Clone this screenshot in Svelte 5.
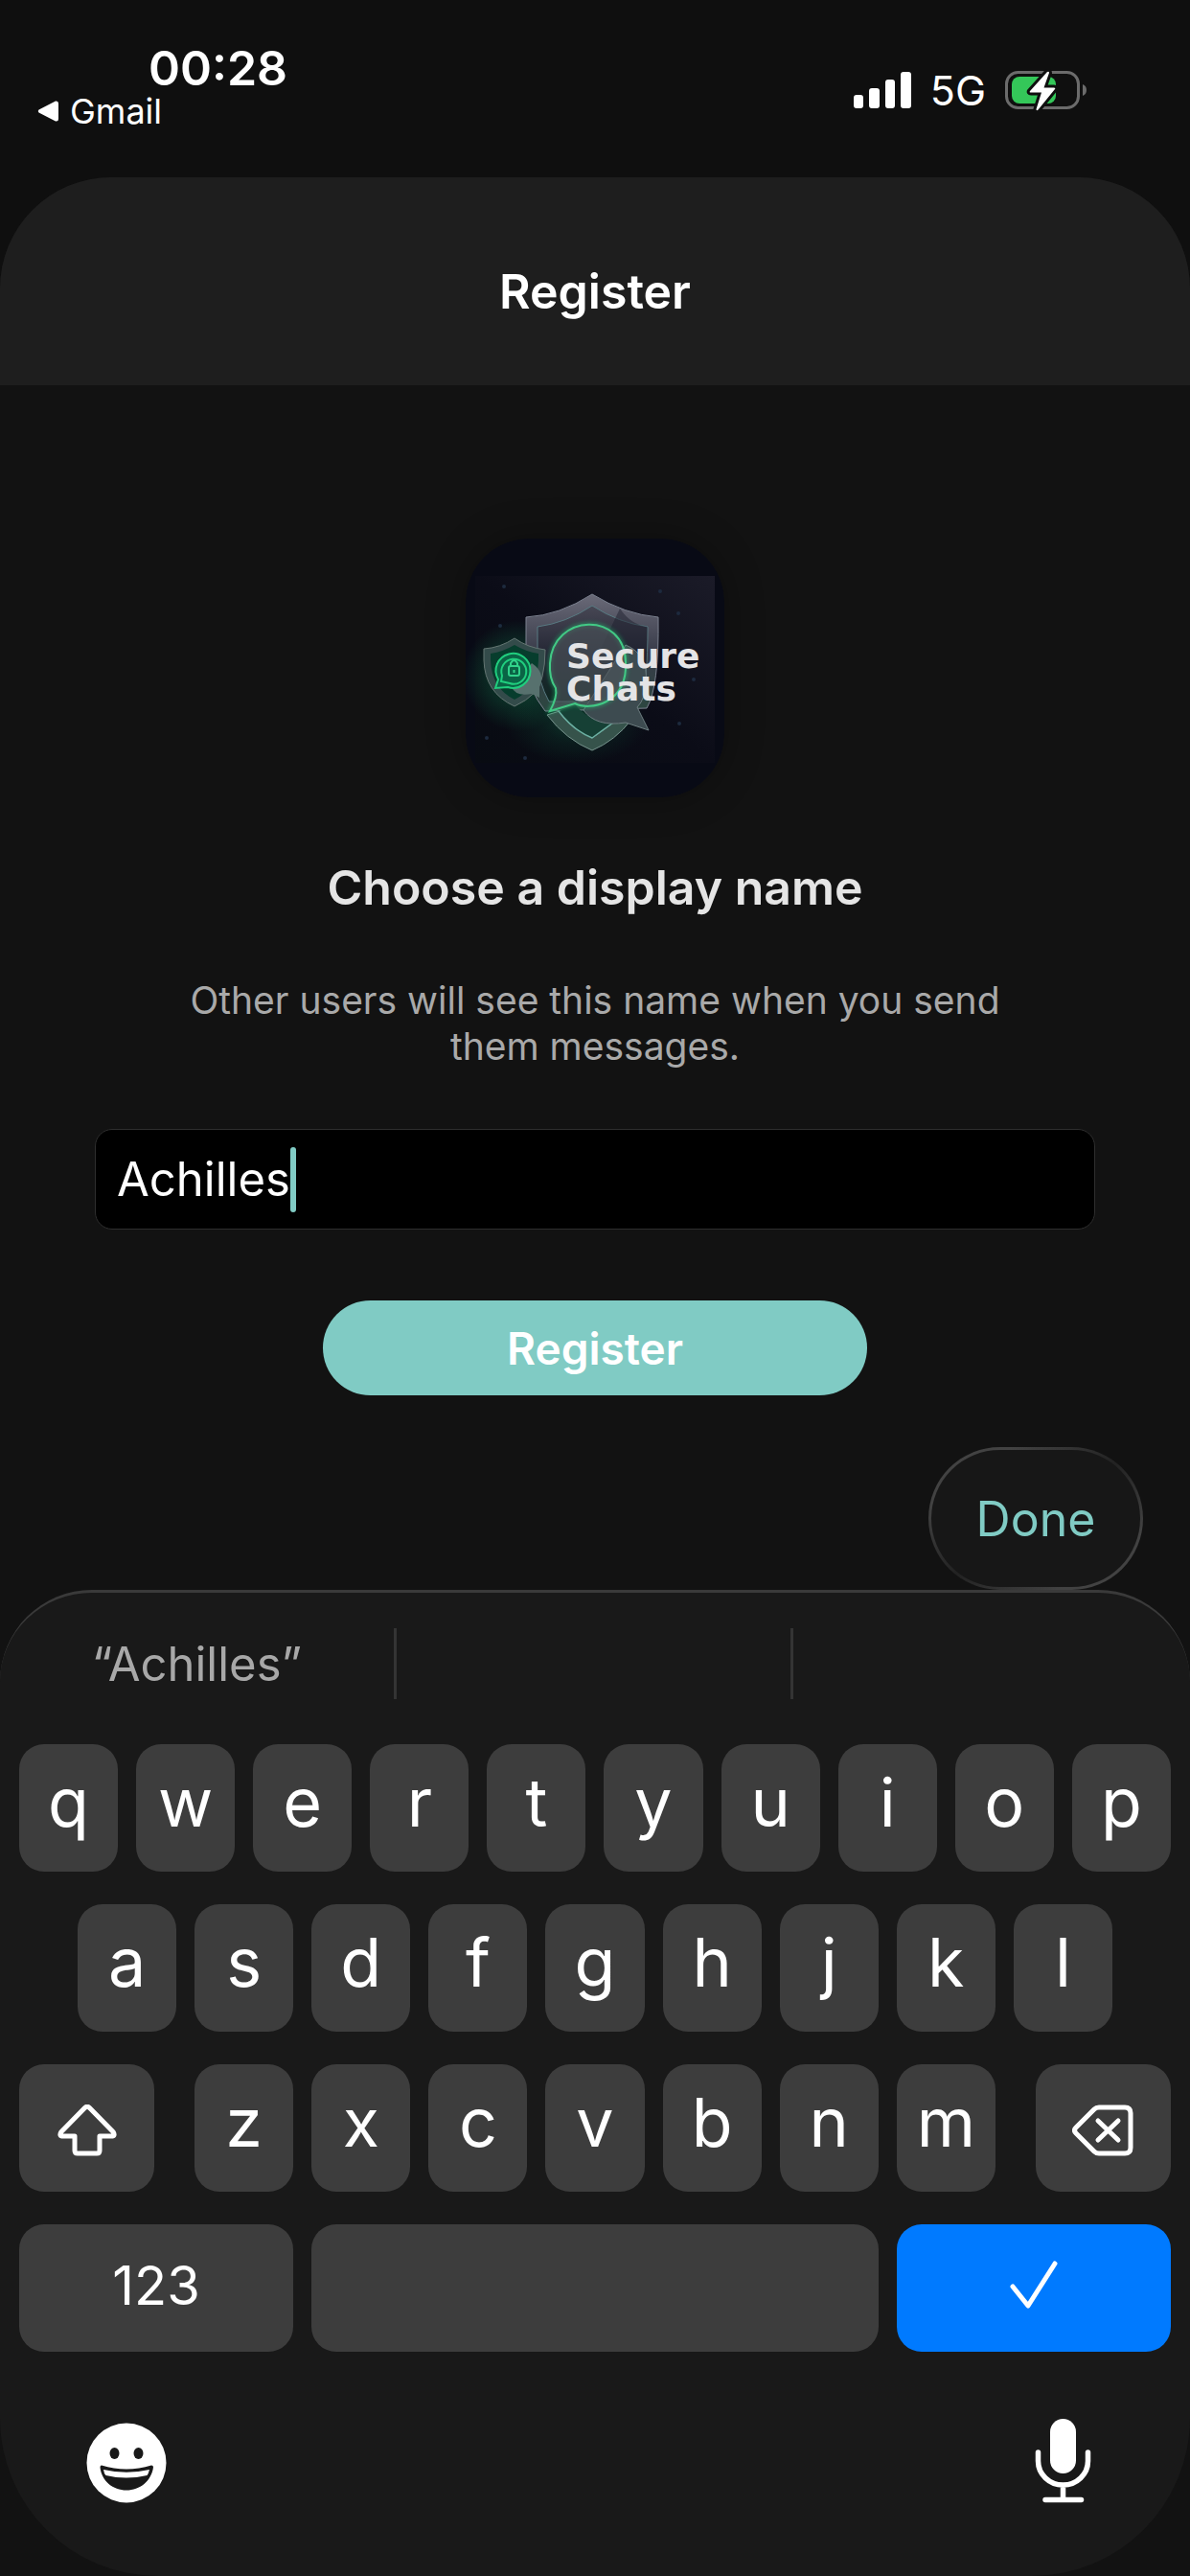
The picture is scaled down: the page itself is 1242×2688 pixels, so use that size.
<script>
	let name = $state('Achilles');

	const topRow = [...'qwertyuiop'];
	const homeRow = [...'asdfghjkl'];
	const bottomRow = [...'zxcvbnm'];

	function press(letter) {
		name += letter;
	}
</script>

<svelte:head>
	<title>Register</title>
</svelte:head>

<div class="screen">
	<header class="status">
		<div class="status-left">
			<time class="clock">00:28</time>
			<a href="#gmail" class="back">
				<svg viewBox="0 0 22 22" width="22" height="22" aria-hidden="true">
					<path d="M1.5 9.6 19 .6Q22 0 22 3v16q0 3-3 2.400L1.500 12.400Q0 11 1.500 9.600Z" fill="#fff" />
				</svg>
				Gmail
			</a>
		</div>
		<div class="status-right">
			<svg viewBox="0 0 60 38" width="60" height="38" aria-hidden="true">
				<g fill="#fff">
					<rect x="0" y="24" width="10" height="14" rx="3" />
					<rect x="16" y="17" width="11" height="21" rx="3" />
					<rect x="33" y="8" width="10" height="30" rx="3" />
					<rect x="49" y="0" width="11" height="38" rx="3" />
				</g>
			</svg>
			<span class="network">5G</span>
			<svg viewBox="0 0 86 44" width="86" height="44" aria-hidden="true">
				<rect x="1.500" y="3.500" width="75" height="37" rx="12" fill="none" stroke="#6b6b6b" stroke-width="3" />
				<path d="M81 16q4 1.500 4 6t-4 6Z" fill="#6b6b6b" />
				<rect x="7" y="8" width="46" height="28" rx="8" fill="#34c759" />
				<path
					d="M44 3 26 23q-1 1.500 1 1.500h11L32.500 42q0 2 2 .500L52 21q1-1.500-1-1.500H40.500L46 4q0-2-2-1Z"
					fill="#fff"
					stroke="#0f0f0f"
					stroke-width="6"
					paint-order="stroke"
				/>
			</svg>
		</div>
	</header>

	<main class="sheet">
		<div class="sheet-header">
			<h1>Register</h1>
		</div>

		<form class="form" onsubmit={(e) => e.preventDefault()}>
			<svg class="logo" viewBox="0 0 270 270" role="img" aria-label="Secure Chats">
				<defs>
					<linearGradient id="card" x1="0" y1="1" x2="1" y2="0">
						<stop offset="0" stop-color="#080b12" />
						<stop offset="0.5" stop-color="#0b0c17" />
						<stop offset="1" stop-color="#1b1b28" />
					</linearGradient>
					<linearGradient id="glass" x1="0" y1="0" x2="0" y2="1">
						<stop offset="0" stop-color="#6a6a78" />
						<stop offset="0.5" stop-color="#383b49" />
						<stop offset="1" stop-color="#2c4740" />
					</linearGradient>
					<linearGradient id="inner" x1="0" y1="0" x2="0" y2="1">
						<stop offset="0" stop-color="#474754" />
						<stop offset="0.5" stop-color="#252735" />
						<stop offset="1" stop-color="#0f2722" />
					</linearGradient>
					<radialGradient id="glow">
						<stop offset="0" stop-color="#149a5c" stop-opacity="0.7" />
						<stop offset="0.5" stop-color="#0f6b44" stop-opacity="0.35" />
						<stop offset="1" stop-color="#0f6b44" stop-opacity="0" />
					</radialGradient>
					<filter id="soft" x="-20%" y="-20%" width="140%" height="140%">
						<feGaussianBlur stdDeviation="2" />
					</filter>
				</defs>
				<rect width="270" height="270" rx="66" fill="#080a15" />
				<rect x="10" y="39" width="250" height="195" fill="url(#card)" />
				<g fill="#1d2a3e">
					<circle cx="40" cy="50" r="2" />
					<circle cx="36" cy="91" r="2" />
					<circle cx="203" cy="55" r="2" />
					<circle cx="222" cy="78" r="2" />
					<circle cx="238" cy="147" r="2" />
					<circle cx="223" cy="193" r="2" />
					<circle cx="62" cy="229" r="2" />
					<circle cx="22" cy="208" r="2" />
				</g>
				<ellipse cx="55" cy="143" rx="58" ry="58" fill="url(#glow)" />
				<ellipse cx="116" cy="190" rx="75" ry="45" fill="url(#glow)" opacity="0.5" />
				<!-- large shield, split around the speech bubble -->
				<path d="M132 58Q98 80 63 82v50q2 25 20 48l106-3q13-22 12-95-35-3-69-24Z" fill="url(#glass)" stroke="#7c8290" />
				<path d="M132 70q-27 18-57 22v36q1 22 12 42h95q8-20 8-78-30-4-58-22Z" fill="url(#inner)" stroke="#587a82" />
				<path d="M161 73 132 134h57l.5-42q-17-2-28.5-19Z" fill="#1d1f2d" opacity="0.5" />
				<path d="M85 184q20 26 47 37 24-10 41-32l-17 2-24 17q-20-11-34-28Z" fill="#36534b" stroke="#77938d" />
				<path d="M97 180q14 19 35 28l24-17-7-3q-22 2-34-14Z" fill="#164035" />
				<path d="M97 180q15 20 35 28l22-16" fill="none" stroke="#6bafa2" stroke-width="1.5" />
				<path d="M167 111q24 10 21 38 0 18-9 27l12 24-24-8q-31 5-44-13Z" fill="#3d4b50" stroke="#6d7d80" />
				<g fill="#4b5359" fill-opacity="0.65" stroke="#22c776">
					<path
						d="M88 180q8-15 6-24-7-10-6-26c3-52 78-55 79-1 2 44-38 51-53 43Z"
						stroke-width="4"
						fill="none"
						opacity="0.5"
						filter="url(#soft)"
					/>
					<path d="M88 180q8-15 6-24-7-10-6-26c3-52 78-55 79-1 2 44-38 51-53 43Z" stroke="#42c985" stroke-width="2" />
				</g>
				<!-- small shield with padlock bubble -->
				<path d="M51 104q-15 10-32 11v12q1 34 32 48 26-12 29-31 3-12 3-28-18-2-32-12Z" fill="#334b4a" stroke="#657673" />
				<path d="M51 111q-12 7-25 9v7q1 29 25 41 24-12 25-41v-7q-13-2-25-9Z" fill="#073d2d" />
				<path d="M69 130q15 10 8 25v11l-8-4q-17 3-21-7Z" fill="#57716e" />
				<path d="m31 156 3-9a18 18 0 1 1 10 8Z" fill="#0a6445" stroke="#20ce7e" stroke-width="2" />
				<path d="m37 149 1-6a13 13 0 1 1 8 8Z" fill="none" stroke="#20ce7e" stroke-width="2" />
				<rect x="45" y="133" width="11" height="10" rx="2" fill="#0a6445" stroke="#31d38b" stroke-width="2" />
				<path d="M47 133v-3q3.500-6 7 0v3M50.500 137v3" fill="none" stroke="#31d38b" stroke-width="2" />
				<text class="logo-text">
					<tspan x="105" y="135">Secure</tspan>
					<tspan x="105" y="169">Chats</tspan>
				</text>
			</svg>

			<h2>Choose a display name</h2>
			<p id="name-hint">Other users will see this name when you send them messages.</p>

			<div class="field">
				<input type="text" aria-label="Display name" aria-describedby="name-hint" bind:value={name} />
				<span class="field-overlay" aria-hidden="true"><span class="typed">{name}</span><span class="caret"></span></span>
			</div>

			<button type="submit" class="submit">Register</button>
		</form>

		<div class="accessory">
			<button type="button" class="done">Done</button>
		</div>
	</main>

	<section class="keyboard" aria-label="Keyboard">
		<div class="suggestions">
			<button type="button">“{name}”</button>
			<button type="button" aria-label="Suggestion 2"></button>
			<button type="button" aria-label="Suggestion 3"></button>
		</div>

		<div class="keys">
			{#each topRow as letter}
				<button type="button" class="key" onclick={() => press(letter)}>{letter}</button>
			{/each}

			{#each homeRow as letter, i}
				<button type="button" class="key" class:home-start={i === 0} onclick={() => press(letter)}>{letter}</button>
			{/each}

			<button type="button" class="key shift" aria-label="Shift">
				<svg viewBox="0 0 62 54" width="62" height="54">
					<path
						d="M28.500 3.500Q31 1 33.500 3.500L58 28.500Q61 33 56 33H44v15q0 3-3 3H21q-3 0-3-3V33H6Q1 33 4 28.500Z"
						fill="none"
						stroke="#fff"
						stroke-width="5"
						stroke-linejoin="round"
					/>
				</svg>
			</button>
			{#each bottomRow as letter}
				<button type="button" class="key" onclick={() => press(letter)}>{letter}</button>
			{/each}
			<button type="button" class="key delete" aria-label="Delete" onclick={() => (name = name.slice(0, -1))}>
				<svg viewBox="0 0 64 54" width="64" height="54">
					<g fill="none" stroke="#fff" stroke-width="5" stroke-linecap="round" stroke-linejoin="round">
						<path d="M28 3h27q6 0 6 6v36q0 6-6 6H28q-3 0-5-2L4 30q-3-3 0-6L23 5q2-2 5-2Z" />
						<path d="m27 17 21 20M48 17 27 37" />
					</g>
				</svg>
			</button>

			<button type="button" class="key numbers">123</button>
			<button type="button" class="key space" aria-label="Space" onclick={() => press(' ')}></button>
			<button type="button" class="key enter" aria-label="Return">
				<svg viewBox="0 0 50 50" width="50" height="50">
					<path
						d="m3 27 16 20L47 3"
						fill="none"
						stroke="#fff"
						stroke-width="5"
						stroke-linecap="round"
						stroke-linejoin="round"
					/>
				</svg>
			</button>
		</div>

		<div class="tools">
			<button type="button" aria-label="Emoji">
				<svg viewBox="0 0 84 84" width="84" height="84">
					<circle cx="42" cy="42" r="41.500" fill="#fff" />
					<ellipse cx="29.500" cy="32" rx="5" ry="6" fill="#191919" />
					<ellipse cx="54.500" cy="32" rx="5" ry="6" fill="#191919" />
					<path d="M16 44.500q-1.500 0-1.500 2C16 61 28 70.500 42 70.500S68 61 70 46.500q0-2-2-2-26 8-52 0Z" fill="#191919" />
					<path d="M18 49q24 5.500 48 0-1 4-2.500 6-22 5-43 0Q18.500 53 18 49Z" fill="#fff" />
				</svg>
			</button>
			<button type="button" aria-label="Dictate">
				<svg viewBox="0 0 60 88" width="60" height="88">
					<rect x="16" y="0" width="27" height="57" rx="13.500" fill="#fff" />
					<path
						d="M3.500 35v9a26 25 0 0 0 52 0v-9M29.500 70v14M11 84.500h37.500"
						fill="none"
						stroke="#fff"
						stroke-width="5.500"
						stroke-linecap="round"
					/>
				</svg>
			</button>
		</div>
	</section>
</div>

<style>
	:global(body) {
		background: #121212;
	}

	.screen {
		display: flex;
		flex-direction: column;
		min-height: 100vh;
		background: #121212;
		color: #fff;
		font-family: Inter, 'Liberation Sans', sans-serif;
	}
	button {
		margin: 0;
		padding: 0;
		border: 0;
		background: none;
		color: inherit;
		font-family: inherit;
		cursor: pointer;
	}
	svg {
		display: block;
	}

	.status {
		display: flex;
		justify-content: space-between;
		box-sizing: border-box;
		height: 305px;
		margin-bottom: -120px;
		padding: 44px 107px 0 39px;
		background: #0f0f0f;
	}
	.status-left {
		display: flex;
		flex-direction: column;
	}
	.clock {
		padding-left: 116px;
		font-size: 50px;
		font-weight: 600;
		line-height: 54px;
	}
	.back {
		display: flex;
		align-items: center;
		gap: 12px;
		color: #fff;
		font-size: 36px;
		line-height: 36px;
		text-decoration: none;
	}
	.status-right {
		display: flex;
		align-items: center;
		gap: 20px;
		height: 100px;
	}
	.network {
		font-size: 43px;
	}

	.sheet {
		display: flex;
		flex-direction: column;
		border-radius: 116px 116px 0 0;
		background: #121212;
	}
	.sheet-header {
		display: flex;
		align-items: center;
		justify-content: center;
		height: 217px;
		border-radius: 116px 116px 0 0;
		background: #1e1e1e;
	}
	h1,
	h2 {
		margin: 0;
		font-size: 50px;
		font-weight: 600;
		line-height: 60px;
	}
	.sheet-header h1 {
		padding-top: 20px;
	}

	.form {
		display: flex;
		flex-direction: column;
		align-items: center;
		padding: 160px 99px 0;
	}
	.logo {
		width: 270px;
		height: 270px;
		border-radius: 66px;
		box-shadow: 0 0 40px rgba(0, 0, 0, 0.3);
	}
	.logo-text {
		fill: #e4e4e6;
		font-family: 'DejaVu Sans', sans-serif;
		font-size: 36px;
		font-weight: 700;
	}
	.form h2 {
		margin-top: 64px;
		color: #e5e5e5;
	}
	.form p {
		max-width: 900px;
		margin: 64px 0 0;
		color: #a9a9a9;
		font-size: 39px;
		line-height: 48px;
		text-align: center;
	}
	.field {
		position: relative;
		width: 100%;
		margin-top: 62px;
	}
	.field input {
		box-sizing: border-box;
		width: 100%;
		height: 105px;
		padding: 0 22px;
		border: 1px solid #2e2e2e;
		border-radius: 18px;
		outline: none;
		background: #000;
		color: #fff;
		font-family: inherit;
		font-size: 49px;
		caret-color: transparent;
	}
	/* repeats the value invisibly so the caret sits after the last letter */
	.field-overlay {
		position: absolute;
		inset: 0;
		display: flex;
		align-items: center;
		padding-left: 23px;
		font-size: 49px;
		pointer-events: none;
	}
	.typed {
		visibility: hidden;
		white-space: pre;
	}
	.caret {
		width: 6px;
		height: 68px;
		border-radius: 3px;
		background: #80cbc4;
	}
	.submit {
		width: 568px;
		height: 99px;
		margin-top: 74px;
		border-radius: 50px;
		background: #80cbc4;
		color: #fff;
		font-size: 46px;
		font-weight: 600;
	}

	.accessory {
		display: flex;
		justify-content: flex-end;
		padding: 54px 49px 0;
	}
	.done {
		box-sizing: border-box;
		width: 224px;
		height: 149px;
		border: 3px solid transparent;
		border-radius: 75px;
		background:
			linear-gradient(#171717, #171717) padding-box,
			linear-gradient(145deg, #424242 20%, #222 50%, #424242 80%) border-box;
		color: #80cbc4;
		font-size: 50px;
	}

	.keyboard {
		display: flex;
		flex: 1;
		flex-direction: column;
		border-top: 3px solid #3a3a3a;
		border-radius: 96px 96px 165px 165px;
		background: #191919;
	}
	.suggestions {
		display: grid;
		grid-template-columns: repeat(3, 1fr);
		height: 74px;
		margin: 37px 0 47px;
	}
	.suggestions button {
		border-right: 3px solid #343434;
		color: #a8a8a8;
		font-size: 49px;
	}
	.suggestions button:last-child {
		border-right: 0;
	}

	.keys {
		display: grid;
		grid-template-columns: repeat(20, 1fr);
		gap: 34px 19px;
		padding: 0 20px;
	}
	.key {
		display: flex;
		box-sizing: border-box;
		grid-column: span 2;
		align-items: center;
		justify-content: center;
		height: 133px;
		padding-bottom: 12px;
		border-radius: 26px;
		background: #3d3d3d;
		font-size: 70px;
	}
	.home-start {
		grid-column: 2 / span 2;
	}
	.shift {
		grid-column: 1 / span 3;
		margin-right: 23px;
		padding: 4px 0 0;
	}
	.delete {
		grid-column: 18 / span 3;
		margin-left: 23px;
		padding: 4px 0 0;
	}
	.numbers {
		grid-column: span 5;
		padding-bottom: 6px;
		font-size: 56px;
	}
	.space {
		grid-column: span 10;
	}
	.enter {
		grid-column: span 5;
		padding-bottom: 8px;
		background: #007aff;
	}

	.tools {
		display: flex;
		align-items: flex-end;
		justify-content: space-between;
		padding: 70px 102px 76px 90px;
	}
</style>
